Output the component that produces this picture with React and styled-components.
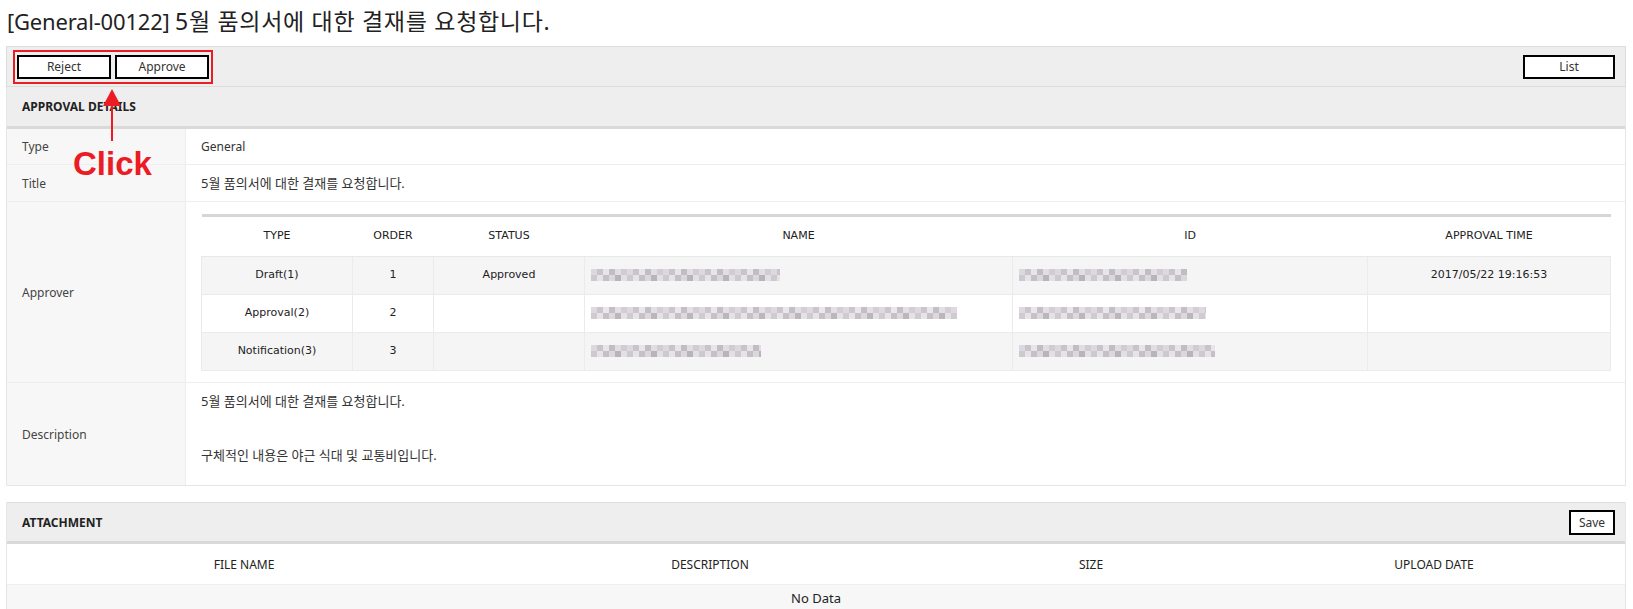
import React from 'react';
import styled, { createGlobalStyle } from 'styled-components';

const GlobalStyle = createGlobalStyle`
  body {
    margin: 0;
    background: #fff;
    font-family: 'Noto Sans', 'Noto Sans CJK KR', sans-serif;
    color: #333;
  }
`;

const Page = styled.div`
  padding: 0 7px 0 6px;
`;

const PageTitle = styled.h1`
  margin: 0;
  padding-top: 5px;
  height: 46px;
  box-sizing: border-box;
  font-size: 22px;
  font-weight: normal;
  line-height: 32px;
  color: #222;
  padding-left: 1px;
  letter-spacing: -0.2px;
  white-space: nowrap;
`;

const TitleKo = styled.span`
  font-size: 23px;
  letter-spacing: 0.7px;
`;

const Toolbar = styled.div`
  display: flex;
  justify-content: space-between;
  align-items: center;
  height: 41px;
  box-sizing: border-box;
  padding: 0 10px 0 6px;
  background: #eeeeee;
  border: 1px solid #dcdcdc;
`;

const ButtonGroup = styled.div`
  position: relative;
  display: flex;
  gap: 4px;
  padding: 3px 2px;
  border: 2px solid #ec1c24;
`;

const Button = styled.button`
  width: ${(p) => p.$width || 94}px;
  height: ${(p) => p.$height || 24}px;
  background: #fff;
  border: 2px solid #000;
  font-family: 'Noto Sans', 'Noto Sans CJK KR', sans-serif;
  font-size: 12px;
  color: #333;
  padding: 0;
  cursor: pointer;
`;

const Arrow = styled.svg`
  position: absolute;
  left: 74px;
  top: 36px;
`;

const ClickLabel = styled.span`
  position: absolute;
  left: 58px;
  top: 93px;
  font-family: 'Liberation Sans', sans-serif;
  font-weight: bold;
  font-size: 33px;
  color: #ec1c24;
  z-index: 2;
  pointer-events: none;
`;

const Panel = styled.div`
  border: 1px solid #e6e6e6;
  border-top: none;
  margin-bottom: ${(p) => p.$gap || 0}px;
`;

const SectionHeader = styled.div`
  display: flex;
  justify-content: space-between;
  align-items: center;
  height: 42px;
  box-sizing: border-box;
  padding: 0 10px 0 15px;
  background: #eeeeee;
  border-bottom: 3px solid #d9d9d9;
  border-top: ${(p) => (p.$top ? '1px solid #dcdcdc' : 'none')};
  font-size: 12px;
  font-weight: bold;
  color: #222;
`;

const Row = styled.div`
  display: grid;
  grid-template-columns: 179px 1fr;
  min-height: ${(p) => p.$height}px;
  border-bottom: ${(p) => (p.$last ? 'none' : '1px solid #eeeeee')};
`;

const Label = styled.div`
  display: flex;
  align-items: center;
  padding-left: 15px;
  background: #f7f7f7;
  border-right: 1px solid #eeeeee;
  font-size: 12px;
  color: #444;
`;

const Value = styled.div`
  display: flex;
  align-items: ${(p) => (p.$top ? 'flex-start' : 'center')};
  padding: ${(p) => p.$pad || '0 14px 0 15px'};
  font-size: ${(p) => (p.$ko ? 13 : 12)}px;
  color: #333;
  line-height: 18px;
  white-space: pre-line;
`;

const InnerTable = styled.table`
  width: 100%;
  border-collapse: collapse;
  border-top: 3px solid #d6d6d6;
  font-family: 'DejaVu Sans', Verdana, sans-serif;
  font-size: 11px;
  color: #222;
  table-layout: fixed;
`;

const Th = styled.th`
  height: 39px;
  font-weight: normal;
  text-align: center;
  background: #fff;
  border-bottom: 1px solid #e8e8e8;
  padding: 0;
`;

const Tr = styled.tr`
  background: ${(p) => (p.$odd ? '#f5f5f5' : '#fff')};
`;

const Td = styled.td`
  height: 37px;
  padding: ${(p) => (p.$left ? '0 6px' : '0')};
  text-align: ${(p) => (p.$left ? 'left' : 'center')};
  border: 1px solid #ebebeb;
  border-top: none;
`;

const Mosaic = styled.span`
  display: inline-block;
  vertical-align: middle;
  width: ${(p) => p.$w}px;
  height: 12px;
  background:
    repeating-linear-gradient(90deg, #d9d3dc 0 6px, #c2bcc6 6px 12px, #e6e3e8 12px 18px, #b9b4ba 18px 24px, #dddbe2 24px 30px, #cdc5cc 30px 36px) 0 0 / 100% 6px no-repeat,
    repeating-linear-gradient(90deg, #c7c3c9 0 6px, #e3e0e5 6px 12px, #bdb7bf 12px 18px, #d7d2d9 18px 24px, #aeaab0 24px 30px, #e1dde3 30px 36px) 0 6px / 100% 6px no-repeat;
  opacity: 0.85;
  filter: blur(0.6px);
`;

const AttachTable = styled.table`
  width: 100%;
  border-collapse: collapse;
  table-layout: fixed;
  font-size: 12px;
  color: #222;
`;

const AttachTh = styled.th`
  width: ${(p) => p.$w};
  height: 40px;
  font-weight: normal;
  text-align: center;
  border-bottom: 1px solid #eeeeee;
  padding: 0;
`;

const EmptyCell = styled.td`
  height: 26px;
  text-align: center;
  background: #f7f7f7;
  font-size: 13px;
  padding: 0;
`;

const approvers = [
  { type: 'Draft(1)', order: 1, status: 'Approved', name: 189, id: 168, time: '2017/05/22 19:16:53' },
  { type: 'Approval(2)', order: 2, status: '', name: 366, id: 187, time: '' },
  { type: 'Notification(3)', order: 3, status: '', name: 170, id: 196, time: '' },
];

const App = () => {
  return (
    <>
      <GlobalStyle />
      <Page>
        <PageTitle>
          [General-00122] <TitleKo>5월 품의서에 대한 결재를 요청합니다.</TitleKo>
        </PageTitle>

        <Toolbar>
          <ButtonGroup>
            <Button>Reject</Button>
            <Button>Approve</Button>
            <Arrow width="46" height="56" viewBox="0 0 46 56">
              <polygon points="23,1 14,18 32,18" fill="#ec1c24" />
              <rect x="22" y="16" width="2" height="37" fill="#ec1c24" />
            </Arrow>
            <ClickLabel>Click</ClickLabel>
          </ButtonGroup>
          <Button $width={92}>List</Button>
        </Toolbar>

        <Panel $gap={16}>
          <SectionHeader>APPROVAL DETAILS</SectionHeader>
          <Row $height={35}>
            <Label>Type</Label>
            <Value>General</Value>
          </Row>
          <Row $height={36}>
            <Label>Title</Label>
            <Value $ko>5월 품의서에 대한 결재를 요청합니다.</Value>
          </Row>
          <Row $height={180}>
            <Label>Approver</Label>
            <Value $pad="11px 14px 11px 15px">
              <InnerTable>
                <colgroup>
                  <col style={{ width: 151 }} />
                  <col style={{ width: 81 }} />
                  <col style={{ width: 151 }} />
                  <col style={{ width: 428 }} />
                  <col style={{ width: 355 }} />
                  <col />
                </colgroup>
                <thead>
                  <tr>
                    <Th>TYPE</Th>
                    <Th>ORDER</Th>
                    <Th>STATUS</Th>
                    <Th>NAME</Th>
                    <Th>ID</Th>
                    <Th>APPROVAL TIME</Th>
                  </tr>
                </thead>
                <tbody>
                  {approvers.map((a, i) => (
                    <Tr key={a.order} $odd={i % 2 === 0}>
                      <Td>{a.type}</Td>
                      <Td>{a.order}</Td>
                      <Td>{a.status}</Td>
                      <Td $left><Mosaic $w={a.name} /></Td>
                      <Td $left><Mosaic $w={a.id} /></Td>
                      <Td>{a.time}</Td>
                    </Tr>
                  ))}
                </tbody>
              </InnerTable>
            </Value>
          </Row>
          <Row $height={101} $last>
            <Label>Description</Label>
            <Value $ko $top $pad="9px 14px 21px 15px">
              {'5월 품의서에 대한 결재를 요청합니다.\n\n\n구체적인 내용은 야근 식대 및 교통비입니다.'}
            </Value>
          </Row>
        </Panel>

        <Panel>
          <SectionHeader $top>
            ATTACHMENT
            <Button $width={46} $height={25}>Save</Button>
          </SectionHeader>
          <AttachTable>
            <thead>
              <tr>
                <AttachTh $w="29.3%">FILE NAME</AttachTh>
                <AttachTh $w="28.3%">DESCRIPTION</AttachTh>
                <AttachTh $w="18.8%">SIZE</AttachTh>
                <AttachTh>UPLOAD DATE</AttachTh>
              </tr>
            </thead>
            <tbody>
              <tr>
                <EmptyCell colSpan={4}>No Data</EmptyCell>
              </tr>
            </tbody>
          </AttachTable>
        </Panel>
      </Page>
    </>
  );
};

export default App;
